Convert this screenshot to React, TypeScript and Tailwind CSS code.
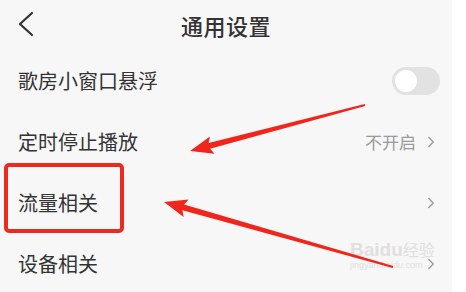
import { ChevronRight } from "lucide-react"

type Pt = [number, number]

// tapered arrow polygon from tail to tip
function arrowPoints(tail: Pt, tip: Pt, head = 20, wing = 9, shaft = 3, tailW = 1) {
  const dx = tip[0] - tail[0]
  const dy = tip[1] - tail[1]
  const len = Math.hypot(dx, dy)
  const ux = dx / len
  const uy = dy / len
  const nx = -uy
  const ny = ux
  const bx = tip[0] - ux * head
  const by = tip[1] - uy * head
  const p = (x: number, y: number, k: number): string => `${x + nx * k},${y + ny * k}`
  return [
    p(tail[0], tail[1], tailW),
    p(bx, by, shaft),
    p(bx - ux * 3, by - uy * 3, wing),
    `${tip[0]},${tip[1]}`,
    p(bx - ux * 3, by - uy * 3, -wing),
    p(bx, by, -shaft),
    p(tail[0], tail[1], -tailW),
  ].join(" ")
}

const rows = [
  { label: "歌房小窗口悬浮", kind: "toggle" },
  { label: "定时停止播放", kind: "value", value: "不开启" },
  { label: "流量相关", kind: "link" },
  { label: "设备相关", kind: "link" },
]

export default function App() {
  return (
    <div
      className="relative w-[466px] h-[292px] overflow-hidden bg-[#f7f7f7] text-[#333333]"
      style={{ fontFamily: '"Noto Sans CJK SC", "Noto Sans", sans-serif' }}
    >
      <div className="flex h-full">
        <div className="w-[452px]">
          <div className="relative flex items-center justify-center h-[50px]">
            <svg className="absolute left-[16px] top-[10px]" width="20" height="28" viewBox="0 0 20 28">
              <polyline points="16,3 4,14 16,25" fill="none" stroke="#333" strokeWidth="2.2" strokeLinecap="round" strokeLinejoin="round" />
            </svg>
            <h1 className="text-[22px] font-medium tracking-[0.5px]">通用设置</h1>
          </div>

          {rows.map((row) => (
            <div key={row.label} className="flex items-center justify-between h-[61px] pl-[18px] pr-[12px]">
              <span className="text-[20px]">{row.label}</span>
              {row.kind === "toggle" && (
                <div className="flex items-center w-[48px] h-[28px] rounded-full bg-[#e2e2e2] px-[3px]">
                  <div className="w-[22px] h-[22px] rounded-full bg-white" />
                </div>
              )}
              {row.kind === "value" && (
                <div className="flex items-center gap-[6px] text-[#9a9a9a]">
                  <span className="text-[17px]">{row.value}</span>
                  <ChevronRight size={18} strokeWidth={1.8} />
                </div>
              )}
              {row.kind === "link" && <ChevronRight size={18} strokeWidth={1.8} color="#9a9a9a" />}
            </div>
          ))}
        </div>
        <div className="flex-1 bg-white" />
      </div>

      {/* annotation overlay */}
      <div className="absolute left-[4px] top-[163px] w-[120px] h-[70px] border-[4px] border-[#ec2a1f] rounded-[5px]" />

      <div className="absolute left-[350px] top-[240px] text-[#e0e0e0] leading-none">
        <div className="text-[19px] font-bold" style={{ fontFamily: '"Liberation Sans", sans-serif' }}>
          Baidu<span className="text-[16px] font-normal" style={{ fontFamily: '"Noto Sans CJK SC", sans-serif' }}>经验</span>
        </div>
        <div className="text-[9px] mt-[2px]" style={{ fontFamily: '"Liberation Sans", sans-serif' }}>
          jingyan.baidu.com
        </div>
      </div>

      <svg className="absolute inset-0" width="466" height="292" viewBox="0 0 466 292">
        <polygon points={arrowPoints([365, 105], [190, 151])} fill="#f0261c" />
        <polygon points={arrowPoints([393, 267], [164, 202])} fill="#f0261c" />
      </svg>
    </div>
  )
}
